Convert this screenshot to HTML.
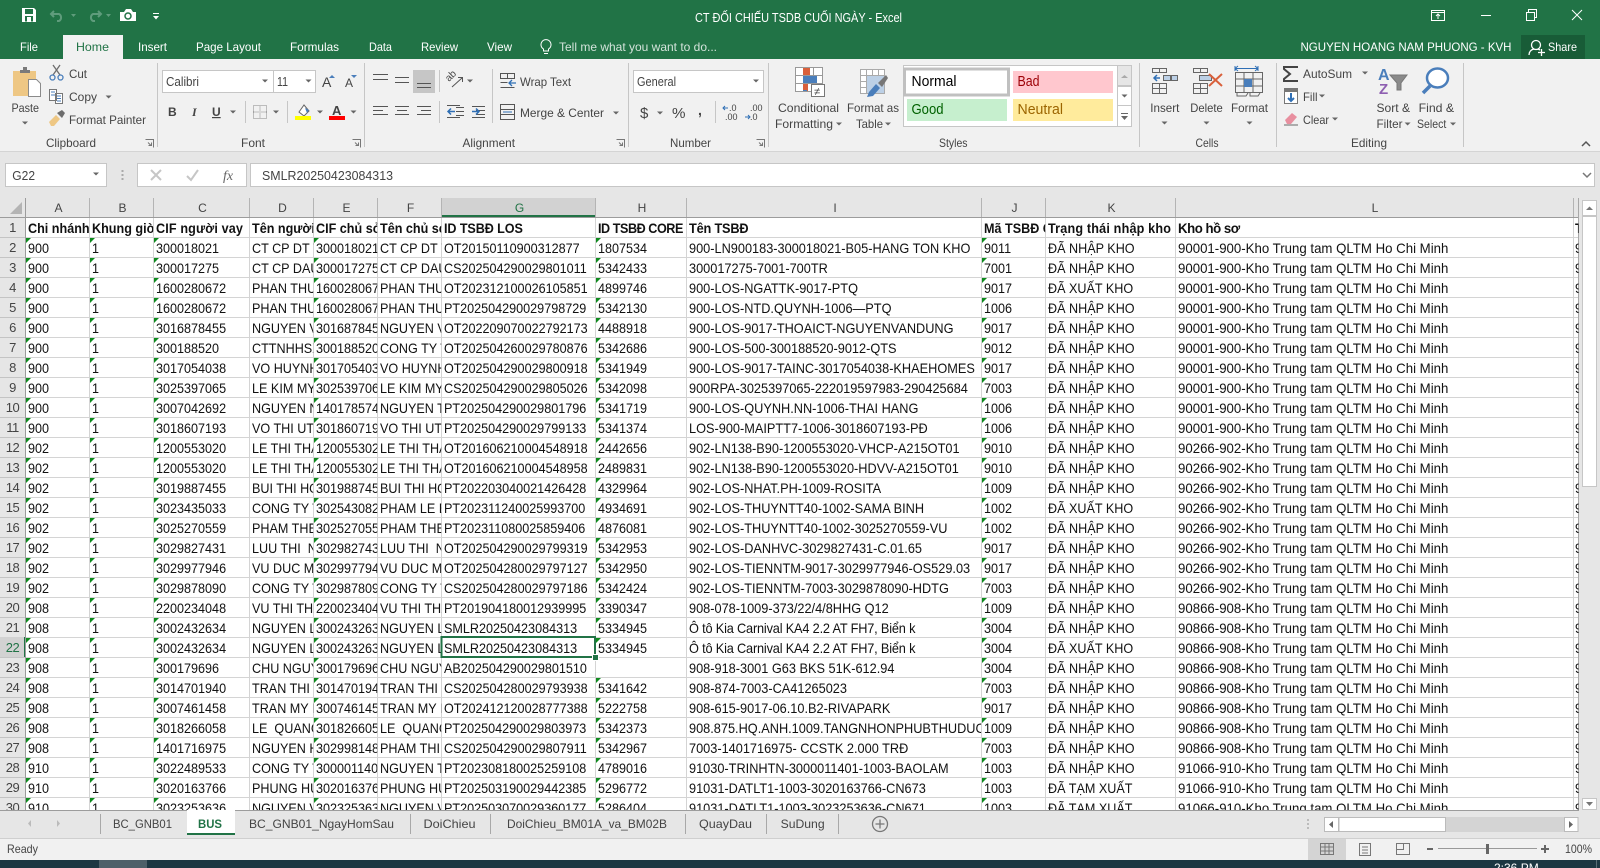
<!DOCTYPE html>
<html><head><meta charset="utf-8"><title>CT ĐỐI CHIẾU TSDB CUỐI NGÀY - Excel</title>
<style>
html,body{margin:0;padding:0;width:1600px;height:868px;overflow:hidden;background:#e6e6e6}
body{position:relative;font-family:"Liberation Sans","Noto Sans CJK SC",sans-serif}
svg{position:absolute;left:0;top:0}
svg text{font-family:"Liberation Sans","Noto Sans CJK SC",sans-serif;font-size:12px;fill:#444}
.c{position:absolute;top:218px;height:592px;overflow:hidden;white-space:pre;font-size:14px;line-height:20px;color:#111;transform:scaleX(.9);transform-origin:0 0}
.r{position:absolute;left:0;top:218px;width:25px;height:592px;overflow:hidden;white-space:pre;font-size:13px;line-height:20px;color:#444;text-align:center;letter-spacing:-.5px}
#bg{position:absolute;left:0;top:0;width:1600px;height:868px}
</style></head><body>
<svg id="bg" width="1600" height="868" viewBox="0 0 1600 868">
<defs>
<pattern id="h" patternUnits="userSpaceOnUse" width="4" height="20"><rect y="17" width="4" height="1" fill="#d4d4d4"/></pattern>
<pattern id="rh" patternUnits="userSpaceOnUse" width="4" height="20"><rect y="17" width="4" height="1" fill="#c4c4c4"/></pattern>
<pattern id="t" patternUnits="userSpaceOnUse" width="5" height="20" y="18"><path d="M0 0h5L0 5z" fill="#0e8a1e"/></pattern>
</defs>
<!-- grid -->
<rect x="26" y="218" width="1552" height="592" fill="#fff"/>
<rect x="0" y="198" width="25" height="612" fill="#e6e6e6"/>
<rect y="217" x="26" width="1552" height="593" fill="url(#h)"/>
<rect y="217" x="0" width="25" height="593" fill="url(#rh)"/>
<g fill="#d4d4d4">
<rect x="89" y="218" width="1" height="592"/><rect x="153" y="218" width="1" height="592"/><rect x="249" y="218" width="1" height="592"/><rect x="313" y="218" width="1" height="592"/><rect x="377" y="218" width="1" height="592"/><rect x="441" y="218" width="1" height="592"/><rect x="595" y="218" width="1" height="592"/><rect x="686" y="218" width="1" height="592"/><rect x="981" y="218" width="1" height="592"/><rect x="1045" y="218" width="1" height="592"/><rect x="1175" y="218" width="1" height="592"/><rect x="1573" y="218" width="1" height="592"/>
</g>
<rect x="1578" y="198" width="1" height="612" fill="#a8a8a8"/>
<!-- headers -->
<rect x="0" y="198" width="1578" height="19" fill="#e6e6e6"/>
<rect x="442" y="198" width="153" height="19" fill="#d2d2d2"/>
<rect x="442" y="215" width="154" height="2" fill="#217346"/>
<rect x="0" y="637" width="25" height="20" fill="#d2d2d2"/>
<rect x="24" y="637" width="2" height="20" fill="#217346"/>
<rect x="0" y="217" width="1578" height="1" fill="#9c9c9c"/>
<rect x="25" y="198" width="1" height="612" fill="#9c9c9c"/>
<g fill="#b4b4b4">
<rect x="89" y="198" width="1" height="19"/><rect x="153" y="198" width="1" height="19"/><rect x="249" y="198" width="1" height="19"/><rect x="313" y="198" width="1" height="19"/><rect x="377" y="198" width="1" height="19"/><rect x="441" y="198" width="1" height="19"/><rect x="595" y="198" width="1" height="19"/><rect x="686" y="198" width="1" height="19"/><rect x="981" y="198" width="1" height="19"/><rect x="1045" y="198" width="1" height="19"/><rect x="1175" y="198" width="1" height="19"/><rect x="1573" y="198" width="1" height="19"/>
</g>
<path d="M22 202v12H10z" fill="#b4b4b4"/>
<g font-size="13" text-anchor="middle" style="font-size:13px">
<text x="58.5" y="212" text-anchor="middle">A</text><text x="122.5" y="212" text-anchor="middle">B</text><text x="202.5" y="212" text-anchor="middle">C</text><text x="282.5" y="212" text-anchor="middle">D</text><text x="346.5" y="212" text-anchor="middle">E</text><text x="410.5" y="212" text-anchor="middle">F</text><text x="519.5" y="212" text-anchor="middle" style="fill:#217346">G</text><text x="642" y="212" text-anchor="middle">H</text><text x="835" y="212" text-anchor="middle">I</text><text x="1014.5" y="212" text-anchor="middle">J</text><text x="1111.5" y="212" text-anchor="middle">K</text><text x="1375" y="212" text-anchor="middle">L</text>
</g>
<!-- error triangles -->
<g transform="translate(26,0)"><rect y="238" width="5" height="572" fill="url(#t)"/></g>
<g transform="translate(90,0)"><rect y="238" width="5" height="572" fill="url(#t)"/></g>
<g transform="translate(154,0)"><rect y="238" width="5" height="572" fill="url(#t)"/></g>
<g transform="translate(314,0)"><rect y="238" width="5" height="572" fill="url(#t)"/></g>
<g transform="translate(596,0)"><rect y="238" width="5" height="572" fill="url(#t)"/></g>
<g transform="translate(982,0)"><rect y="238" width="5" height="572" fill="url(#t)"/></g>
<rect x="596" y="658" width="6" height="6" fill="#fff"/>
</svg>

<div class="r">1
2
3
4
5
6
7
8
9
10
11
12
13
14
15
16
17
18
19
20
21
<span style="color:#217346">22</span>
23
24
25
26
27
28
29
30</div>

<div class="c" style="left:28px;width:68px"><b>Chi nhánh</b>
900
900
900
900
900
900
900
900
900
900
902
902
902
902
902
902
902
902
908
908
908
908
908
908
908
908
910
910
910</div>
<div class="c" style="left:92px;width:68px"><b>Khung giờ</b>
1
1
1
1
1
1
1
1
1
1
1
1
1
1
1
1
1
1
1
1
1
1
1
1
1
1
1
1
1</div>
<div class="c" style="left:156px;width:103px"><b style="letter-spacing:.15px">CIF người vay</b>
300018021
300017275
1600280672
1600280672
3016878455
300188520
3017054038
3025397065
3007042692
3018607193
1200553020
1200553020
3019887455
3023435033
3025270559
3029827431
3029977946
3029878090
2200234048
3002432634
3002432634
300179696
3014701940
3007461458
3018266058
1401716975
3022489533
3020163766
3023253636</div>
<div class="c" style="left:252px;width:68px"><b>Tên người vay</b>
CT CP DT VA
CT CP DAU TU
PHAN THUY
PHAN THUY
NGUYEN VAN
CTTNHHSX
VO HUYNH
LE KIM MY
NGUYEN N
VO THI UT
LE THI THAN
LE THI THAN
BUI THI HONG
CONG TY TN
PHAM THE
LUU THI  NG
VU DUC MIN
CONG TY TN
VU THI THA
NGUYEN LE
NGUYEN LE
CHU NGUYEN
TRAN THI  N
TRAN MY LE
LE  QUANG
NGUYEN HO
CONG TY TN
PHUNG HUU
NGUYEN VAN</div>
<div class="c" style="left:316px;width:68px"><b>CIF chủ sở hữu</b>
300018021
300017275
1600280672
1600280672
3016878455
300188520
3017054038
3025397065
1401785740
3018607193
1200553020
1200553020
3019887455
3025430820
3025270559
3029827431
3029977946
3029878090
2200234048
3002432634
3002432634
300179696
3014701940
3007461458
3018266058
3029981480
3000011401
3020163766
3023253636</div>
<div class="c" style="left:380px;width:68px"><b>Tên chủ sở hữu</b>
CT CP DT VA
CT CP DAU TU
PHAN THUY
PHAN THUY
NGUYEN VAN
CONG TY TN
VO HUYNH
LE KIM MY
NGUYEN TH
VO THI UT
LE THI THAN
LE THI THAN
BUI THI HONG
PHAM LE BA
PHAM THE
LUU THI  NG
VU DUC MIN
CONG TY TN
VU THI THA
NGUYEN LE
NGUYEN LE
CHU NGUYEN
TRAN THI  N
TRAN MY LE
LE  QUANG
PHAM THI H
NGUYEN TH
PHUNG HUU
NGUYEN VAN</div>
<div class="c" style="left:444px;width:168px"><b style="letter-spacing:-.1px">ID TSBĐ LOS</b>
OT20150110900312877
CS202504290029801011
OT202312100026105851
PT202504290029798729
OT202209070022792173
OT202504260029780876
OT202504290029800918
CS202504290029805026
PT202504290029801796
PT202504290029799133
OT201606210004548918
OT201606210004548958
PT202203040021426428
PT202311240025993700
PT202311080025859406
OT202504290029799319
OT202504280029797127
CS202504280029797186
PT201904180012939995
SMLR20250423084313
SMLR20250423084313
AB202504290029801510
CS202504280029793938
OT202412120028777388
PT202504290029803973
CS202504290029807911
PT202308180025259108
PT202503190029442385
PT202503070029360177</div>
<div class="c" style="left:598px;width:98px"><b style="letter-spacing:-.5px">ID TSBĐ CORE</b>
1807534
5342433
4899746
5342130
4488918
5342686
5341949
5342098
5341719
5341374
2442656
2489831
4329964
4934691
4876081
5342953
5342950
5342424
3390347
5334945
5334945

5341642
5222758
5342373
5342967
4789016
5296772
5286404</div>
<div class="c" style="left:689px;width:321px;transform:scaleX(.91)"><b style="letter-spacing:-.2px">Tên TSBĐ</b>
900-LN900183-300018021-B05-HANG TON KHO
300017275-7001-700TR
900-LOS-NGATTK-9017-PTQ
900-LOS-NTD.QUYNH-1006—PTQ
900-LOS-9017-THOAICT-NGUYENVANDUNG
900-LOS-500-300188520-9012-QTS
900-LOS-9017-TAINC-3017054038-KHAEHOMES
900RPA-3025397065-222019597983-290425684
900-LOS-QUYNH.NN-1006-THAI HANG
LOS-900-MAIPTT7-1006-3018607193-PĐ
902-LN138-B90-1200553020-VHCP-A215OT01
902-LN138-B90-1200553020-HDVV-A215OT01
902-LOS-NHAT.PH-1009-ROSITA
902-LOS-THUYNTT40-1002-SAMA BINH
902-LOS-THUYNTT40-1002-3025270559-VU
902-LOS-DANHVC-3029827431-C.01.65
902-LOS-TIENNTM-9017-3029977946-OS529.03
902-LOS-TIENNTM-7003-3029878090-HDTG
908-078-1009-373/22/4/8HHG Q12
<span style="letter-spacing:-.19px">Ô tô Kia Carnival KA4 2.2 AT FH7, Biển k</span>
<span style="letter-spacing:-.19px">Ô tô Kia Carnival KA4 2.2 AT FH7, Biển k</span>
908-918-3001 G63 BKS 51K-612.94
908-874-7003-CA41265023
908-615-9017-06.10.B2-RIVAPARK
908.875.HQ.ANH.1009.TANGNHONPHUBTHUDUC
7003-1401716975- CCSTK 2.000 TRĐ
91030-TRINHTN-3000011401-1003-BAOLAM
91031-DATLT1-1003-3020163766-CN673
91031-DATLT1-1003-3023253636-CN671</div>
<div class="c" style="left:984px;width:68px"><b>Mã TSBĐ Core</b>
9011
7001
9017
1006
9017
9012
9017
7003
1006
1006
9010
9010
1009
1002
1002
9017
9017
7003
1009
3004
3004
3004
7003
9017
1009
7003
1003
1003
1003</div>
<div class="c" style="left:1048px;width:141px"><b style="letter-spacing:.2px">Trạng thái nhập kho</b>
ĐÃ NHẬP KHO
ĐÃ NHẬP KHO
ĐÃ XUẤT KHO
ĐÃ NHẬP KHO
ĐÃ NHẬP KHO
ĐÃ NHẬP KHO
ĐÃ NHẬP KHO
ĐÃ NHẬP KHO
ĐÃ NHẬP KHO
ĐÃ NHẬP KHO
ĐÃ NHẬP KHO
ĐÃ NHẬP KHO
ĐÃ NHẬP KHO
ĐÃ XUẤT KHO
ĐÃ NHẬP KHO
ĐÃ NHẬP KHO
ĐÃ NHẬP KHO
ĐÃ NHẬP KHO
ĐÃ NHẬP KHO
ĐÃ NHẬP KHO
ĐÃ XUẤT KHO
ĐÃ NHẬP KHO
ĐÃ NHẬP KHO
ĐÃ NHẬP KHO
ĐÃ NHẬP KHO
ĐÃ NHẬP KHO
ĐÃ NHẬP KHO
ĐÃ TẠM XUẤT
ĐÃ TẠM XUẤT</div>
<div class="c" style="left:1178px;width:418px;transform:scaleX(.945)"><b style="letter-spacing:-.5px">Kho hồ sơ</b>
90001-900-Kho Trung tam QLTM Ho Chi Minh
90001-900-Kho Trung tam QLTM Ho Chi Minh
90001-900-Kho Trung tam QLTM Ho Chi Minh
90001-900-Kho Trung tam QLTM Ho Chi Minh
90001-900-Kho Trung tam QLTM Ho Chi Minh
90001-900-Kho Trung tam QLTM Ho Chi Minh
90001-900-Kho Trung tam QLTM Ho Chi Minh
90001-900-Kho Trung tam QLTM Ho Chi Minh
90001-900-Kho Trung tam QLTM Ho Chi Minh
90001-900-Kho Trung tam QLTM Ho Chi Minh
90266-902-Kho Trung tam QLTM Ho Chi Minh
90266-902-Kho Trung tam QLTM Ho Chi Minh
90266-902-Kho Trung tam QLTM Ho Chi Minh
90266-902-Kho Trung tam QLTM Ho Chi Minh
90266-902-Kho Trung tam QLTM Ho Chi Minh
90266-902-Kho Trung tam QLTM Ho Chi Minh
90266-902-Kho Trung tam QLTM Ho Chi Minh
90266-902-Kho Trung tam QLTM Ho Chi Minh
90866-908-Kho Trung tam QLTM Ho Chi Minh
90866-908-Kho Trung tam QLTM Ho Chi Minh
90866-908-Kho Trung tam QLTM Ho Chi Minh
90866-908-Kho Trung tam QLTM Ho Chi Minh
90866-908-Kho Trung tam QLTM Ho Chi Minh
90866-908-Kho Trung tam QLTM Ho Chi Minh
90866-908-Kho Trung tam QLTM Ho Chi Minh
90866-908-Kho Trung tam QLTM Ho Chi Minh
91066-910-Kho Trung tam QLTM Ho Chi Minh
91066-910-Kho Trung tam QLTM Ho Chi Minh
91066-910-Kho Trung tam QLTM Ho Chi Minh</div>
<div class="c" style="left:1575px;width:4px"><b>T</b>
9
9
9
9
9
9
9
9
9
9
9
9
9
9
9
9
9
9
9
9
9
9
9
9
9
9
9
9
9</div>

<svg width="1600" height="868" viewBox="0 0 1600 868">
<defs>
<path id="a" d="M-3-1.5h6l-3 3z" fill="#666"/>
<path id="la" d="M.5.5h8v8M3 3.5l3 3M3.5 6.5h3v-3" fill="none" stroke="#777"/>
</defs>
<!-- selection -->
<rect x="441.5" y="637" width="153.5" height="20" fill="none" stroke="#217346" stroke-width="2"/>
<rect x="592" y="654" width="7" height="7" fill="#fff"/>
<rect x="593" y="655" width="5" height="5" fill="#217346"/>

<!-- title bar -->
<rect width="1600" height="59" fill="#217346"/>
<rect x="63" y="35" width="60" height="24" fill="#f1f1f1"/>
<rect x="1521" y="35" width="64" height="24" fill="#185c37"/>
<path d="M22 8h12l2 2v12H22z" fill="#fff"/>
<rect x="25" y="9" width="8" height="5" fill="#217346"/>
<rect x="25" y="16" width="8" height="5.5" fill="#217346"/>
<rect x="27" y="17" width="4" height="5" fill="#fff"/>
<g fill="none" stroke="#5f9c7c" stroke-width="2"><path d="M54 11l-3 3 3 3"/><path d="M52 14h7a4 4 0 0 1 0 7h-2"/><path d="M98 11l3 3-3 3"/><path d="M100 14h-7a4 4 0 0 0 0 7h2"/></g>
<path d="M71 14h5l-2.5 3zM106 14h5l-2.5 3z" fill="#5f9c7c"/>
<path d="M120 12h4l2-3h5l2 3h3v9h-16z" fill="#fff"/>
<circle cx="128" cy="16" r="3" fill="none" stroke="#217346" stroke-width="1.5"/>
<path d="M153 13h6v1h-6zM153 16h6l-3 3.5z" fill="#fff"/>
<text x="695" y="22" textLength="207" lengthAdjust="spacingAndGlyphs" style="fill:#fff;font-size:13px">CT ĐỐI CHIẾU TSDB CUỐI NGÀY - Excel</text>
<g fill="none" stroke="#fff" stroke-width="1">
<path d="M1431.5 10.5h13v10h-13zM1431.5 12.5h13M1438 19v-5M1436 16l2-2 2 2"/>
<path d="M1481 15.5h10"/>
<path d="M1526.5 12.5h8v8h-8zM1528.5 12v-2.5h8v8H1535"/>
<path d="M1572 10l10 10M1582 10l-10 10"/>
</g>
<g style="font-size:13px">
<text x="20" y="51" textLength="18" lengthAdjust="spacingAndGlyphs" style="fill:#fff">File</text>
<text x="76" y="51" textLength="33" lengthAdjust="spacingAndGlyphs" style="fill:#217346">Home</text>
<text x="138" y="51" textLength="29" lengthAdjust="spacingAndGlyphs" style="fill:#fff">Insert</text>
<text x="196" y="51" textLength="65" lengthAdjust="spacingAndGlyphs" style="fill:#fff">Page Layout</text>
<text x="290" y="51" textLength="49" lengthAdjust="spacingAndGlyphs" style="fill:#fff">Formulas</text>
<text x="369" y="51" textLength="23" lengthAdjust="spacingAndGlyphs" style="fill:#fff">Data</text>
<text x="421" y="51" textLength="37" lengthAdjust="spacingAndGlyphs" style="fill:#fff">Review</text>
<text x="487" y="51" textLength="25" lengthAdjust="spacingAndGlyphs" style="fill:#fff">View</text>
<text x="559" y="51" textLength="158" lengthAdjust="spacingAndGlyphs" style="fill:#d3e3da">Tell me what you want to do...</text>
<text x="1300.5" y="51" textLength="211" lengthAdjust="spacingAndGlyphs" style="fill:#fff">NGUYEN HOANG NAM PHUONG - KVH</text>
<text x="1548" y="51" textLength="29" lengthAdjust="spacingAndGlyphs" style="fill:#fff">Share</text>
</g>
<path d="M543.5 49a5 5 0 1 1 5 0v2h-5zM544 53.500h4" fill="none" stroke="#fff"/>
<g fill="none" stroke="#fff" stroke-width="1.3"><circle cx="1536" cy="45" r="4.500"/><path d="M1529 55c0-4 3-5.500 5-6M1538 49l2 1M1538 52.500h7M1541.500 49v7"/></g>

<!-- ribbon -->
<rect y="59" width="1600" height="92" fill="#f1f1f1"/>
<rect y="151" width="1600" height="1" fill="#d4d4d4"/>
<g fill="#c6c6c6">
<rect x="157" y="63" width="1" height="84"/><rect x="364" y="63" width="1" height="84"/><rect x="628" y="63" width="1" height="84"/><rect x="768" y="63" width="1" height="84"/><rect x="1139" y="63" width="1" height="84"/><rect x="1276" y="63" width="1" height="84"/><rect x="1463" y="63" width="1" height="84"/>
<rect x="245" y="101" width="1" height="22"/><rect x="287" y="101" width="1" height="22"/><rect x="439" y="70" width="1" height="22"/><rect x="439" y="101" width="1" height="22"/><rect x="492" y="69" width="1" height="54"/><rect x="715" y="101" width="1" height="22"/>
</g>
<!-- clipboard -->
<rect x="13" y="71" width="23" height="25" fill="#eec784"/>
<path d="M20 73v-3h3v-3h4v3h3v3z" fill="#7a7a7a"/>
<path d="M28.5 79.5h8l4 4v13h-12z" fill="#fff" stroke="#8a8a8a"/>
<use href="#a" x="25" y="123"/>
<g fill="none" stroke="#6d6d6d" stroke-width="1.3"><path d="M53 75l7-10M60 75l-7-10"/></g>
<g fill="none" stroke="#4a7ebb" stroke-width="1.3"><circle cx="52.5" cy="77.5" r="2.5"/><circle cx="60.5" cy="77.5" r="2.5"/></g>
<g fill="#fff" stroke="#777"><path d="M49.5 89.5h7v11h-7zM55.5 93.5h7v10h-7z"/></g>
<path d="M51 92h4M51 95h4M57 96h4M57 98.5h4M57 101h4" stroke="#4a7ebb" fill="none"/>
<path d="M49 122l7-7 4 4-6 7h-3z" fill="#eec784"/>
<path d="M57 113l5-3 3 3-3 5z" fill="#6d6d6d"/>
<use href="#a" x="108.6" y="97"/>
<g style="font-size:13px">
<text x="69" y="78" textLength="18" lengthAdjust="spacingAndGlyphs">Cut</text>
<text x="69" y="101" textLength="28" lengthAdjust="spacingAndGlyphs">Copy</text>
<text x="69" y="124" textLength="77" lengthAdjust="spacingAndGlyphs">Format Painter</text>
<text x="11.5" y="112" textLength="27.5" lengthAdjust="spacingAndGlyphs">Paste</text>
<text x="46" y="147" textLength="50" lengthAdjust="spacingAndGlyphs">Clipboard</text>
<text x="241" y="147" textLength="24" lengthAdjust="spacingAndGlyphs">Font</text>
<text x="462.5" y="147" textLength="52.5" lengthAdjust="spacingAndGlyphs">Alignment</text>
<text x="670" y="147" textLength="41" lengthAdjust="spacingAndGlyphs">Number</text>
<text x="939" y="147" textLength="28.5" lengthAdjust="spacingAndGlyphs">Styles</text>
<text x="1195.5" y="147" textLength="23" lengthAdjust="spacingAndGlyphs">Cells</text>
<text x="1351" y="147" textLength="36" lengthAdjust="spacingAndGlyphs">Editing</text>
<text x="520" y="86" textLength="51" lengthAdjust="spacingAndGlyphs">Wrap Text</text>
<text x="520" y="117" textLength="84" lengthAdjust="spacingAndGlyphs">Merge &amp; Center</text>
<text x="778" y="112" textLength="61" lengthAdjust="spacingAndGlyphs">Conditional</text>
<text x="775" y="128" textLength="58" lengthAdjust="spacingAndGlyphs">Formatting</text>
<text x="847" y="112" textLength="52" lengthAdjust="spacingAndGlyphs">Format as</text>
<text x="856" y="128" textLength="27" lengthAdjust="spacingAndGlyphs">Table</text>
<text x="1150.3" y="112" textLength="29" lengthAdjust="spacingAndGlyphs">Insert</text>
<text x="1190.3" y="112" textLength="32.5" lengthAdjust="spacingAndGlyphs">Delete</text>
<text x="1231" y="112" textLength="37" lengthAdjust="spacingAndGlyphs">Format</text>
<text x="1303" y="78" textLength="49" lengthAdjust="spacingAndGlyphs">AutoSum</text>
<text x="1303" y="101" textLength="14.5" lengthAdjust="spacingAndGlyphs">Fill</text>
<text x="1303" y="124" textLength="26" lengthAdjust="spacingAndGlyphs">Clear</text>
<text x="1376.5" y="112" textLength="33.5" lengthAdjust="spacingAndGlyphs">Sort &amp;</text>
<text x="1376.5" y="128" textLength="26" lengthAdjust="spacingAndGlyphs">Filter</text>
<text x="1418.6" y="112" textLength="35.5" lengthAdjust="spacingAndGlyphs">Find &amp;</text>
<text x="1417" y="128" textLength="29.3" lengthAdjust="spacingAndGlyphs">Select</text>
</g>
<use href="#la" x="145" y="139"/><use href="#la" x="352" y="139"/><use href="#la" x="616" y="139"/><use href="#la" x="756" y="139"/>
<!-- font -->
<rect x="162.5" y="70.5" width="153" height="22" fill="#fff" stroke="#c6c6c6"/>
<rect x="273" y="71" width="1" height="21" fill="#c6c6c6"/>
<text x="166" y="86" textLength="33" lengthAdjust="spacingAndGlyphs" style="font-size:13px">Calibri</text>
<text x="277" y="86" textLength="11" lengthAdjust="spacingAndGlyphs" style="font-size:13px">11</text>
<use href="#a" x="265" y="81"/><use href="#a" x="308.5" y="81"/>
<text x="322" y="87" style="font-size:14px">A</text>
<path d="M329 78l3-3 3 3z" fill="#4a7ebb"/>
<text x="345" y="87" style="font-size:12px">A</text>
<path d="M351 75h6l-3 3z" fill="#4a7ebb"/>
<text x="168" y="116" style="font-weight:bold;font-size:12px">B</text>
<text x="192" y="116" style="font-style:italic;font-size:12px;font-family:'Liberation Serif',serif;font-weight:bold">I</text>
<text x="212" y="116" style="font-size:12px;font-weight:bold;text-decoration:underline">U</text>
<use href="#a" x="233" y="112"/>
<path d="M253.5 105.5h13v13h-13zM260 105.5v13M253.5 112h13" fill="none" stroke="#888" stroke-dasharray="1 1"/>
<use href="#a" x="276" y="112"/>
<path d="M299 112l5-7 5 6-5 5z" fill="#fff" stroke="#666"/><path d="M305 108l4 2-2 3z" fill="#4a7ebb"/>
<rect x="295" y="116" width="16" height="4" fill="#ffff00"/>
<use href="#a" x="320" y="112"/>
<text x="332" y="115" style="font-size:13px;font-weight:bold">A</text>
<rect x="329" y="116" width="16" height="4" fill="#ff0000"/>
<use href="#a" x="353.5" y="112"/>
<!-- alignment -->
<rect x="413" y="70" width="22" height="23" fill="#c6c6c6"/>
<g stroke="#555" fill="none">
<path d="M373 74.5h15M373 79.5h15M395 77.5h14M395 82.5h14M417 83.5h14M417 87.5h14"/>
<path d="M373 106.5h15M373 110.5h10M373 114.5h15M395 106.5h14M397 110.5h10M395 114.5h14M417 106.5h14M421 110.5h10M417 114.5h14"/>
<path d="M456 107.5h8M456 111.5h8M456 115.5h8M447 105.500h13M472 106.500h13M476 110.500h9M476 114.500h9M472 117.500h13M447 117.500h13"/>
</g>
<g stroke="#2f6fb5" fill="none" stroke-width="1.5"><path d="M455 111.500h-7M451 108.500l-3 3 3 3M472 111.500h7M476 108.500l3 3-3 3"/></g>
<text x="0" y="0" transform="translate(449,82) rotate(-45)" style="font-size:10px">ab</text>
<path d="M452 87l10-9M458 77.500h4.500v4.500" fill="none" stroke="#555"/>
<use href="#a" x="470" y="81"/>
<path d="M500.5 73.500h14v5h-14zM507.500 73.500v5M500.5 82.500h7M500.5 87.500h14" fill="none" stroke="#555"/>
<path d="M516 83h-7M512 80l-3 3 3 3" fill="none" stroke="#2f6fb5" stroke-width="1.3"/>
<path d="M500.5 104.500h14v15h-14zM500.5 109.500h14M500.5 114.500h14" fill="none" stroke="#555"/>
<path d="M503 112h9" stroke="#2f6fb5"/>
<use href="#a" x="616" y="113"/>
<!-- number -->
<rect x="633.5" y="70.5" width="130" height="22" fill="#fff" stroke="#c6c6c6"/>
<text x="637" y="86" textLength="39" lengthAdjust="spacingAndGlyphs" style="font-size:13px">General</text>
<use href="#a" x="756" y="81"/>
<text x="640" y="118" style="font-size:15px">$</text>
<use href="#a" x="660" y="113"/>
<text x="672" y="118" textLength="13.500" lengthAdjust="spacingAndGlyphs" style="font-size:15px">%</text>
<text x="698" y="115" style="font-weight:bold;font-size:14px">,</text>
<text x="729" y="111" style="font-size:9px">.0</text><text x="725" y="120" style="font-size:9px">.00</text><text x="750" y="111" style="font-size:9px">.00</text><text x="750" y="120" style="font-size:9px">.0</text>
<path d="M728 108h-5M725 106l-2 2 2 2M745 117h5M748 115l2 2-2 2" fill="none" stroke="#2f6fb5"/>
<!-- conditional formatting -->
<path d="M795.5 67.5h27v24h-27zM795.5 75.5h27M795.5 83.5h27M804.5 67.5v24M813.5 67.5v24" fill="#fff" stroke="#999"/>
<rect x="803" y="68" width="7" height="7" fill="#d9603b"/><rect x="803" y="76" width="14" height="7" fill="#4a7ebb"/><rect x="803" y="84" width="5" height="7" fill="#d9603b"/><rect x="803" y="90" width="4" height="1" fill="#4a7ebb"/>
<rect x="811.5" y="84.500" width="13" height="12" fill="#fff" stroke="#777"/>
<text x="814" y="95" style="font-size:11px">≠</text>
<use href="#a" x="839" y="124"/>
<path d="M860.5 69.5h24v24h-24zM860.5 75.5h24M860.5 81.5h24M860.5 87.5h24M866.5 69.5v24M872.5 69.5v24M878.5 69.5v24" fill="#fff" stroke="#aaa"/>
<rect x="867" y="76" width="17" height="17" fill="#bcd0e6"/>
<path d="M869 92l7-8 4 4-7 8-6 1z" fill="#4a7ebb"/><path d="M878 83l8-8 2 3-6 9z" fill="#777"/>
<use href="#a" x="888" y="124"/>
<!-- styles -->
<rect x="903.5" y="65.5" width="228" height="61" fill="#fff" stroke="#c6c6c6"/>
<rect x="904.5" y="69" width="104" height="26" fill="#fff" stroke="#c0c0c0" stroke-width="3"/>
<rect x="1013" y="71" width="100" height="22" fill="#ffc7ce"/>
<rect x="907" y="99" width="100" height="22" fill="#c6efce"/>
<rect x="1013" y="99" width="100" height="22" fill="#ffeb9c"/>
<g style="font-size:15px">
<text x="911.5" y="86" textLength="45" lengthAdjust="spacingAndGlyphs" style="fill:#000;font-size:15px">Normal</text>
<text x="1017.5" y="86" textLength="22" lengthAdjust="spacingAndGlyphs" style="fill:#9c0006;font-size:15px">Bad</text>
<text x="911.5" y="114" textLength="32" lengthAdjust="spacingAndGlyphs" style="fill:#006100;font-size:15px">Good</text>
<text x="1017.5" y="114" textLength="45.5" lengthAdjust="spacingAndGlyphs" style="fill:#9c6500;font-size:15px">Neutral</text>
</g>
<rect x="1117.5" y="65.5" width="14" height="20" fill="#e6e6e6" stroke="#c6c6c6"/>
<rect x="1117.5" y="86.5" width="14" height="19" fill="#fff" stroke="#c6c6c6"/>
<rect x="1117.5" y="105.5" width="14" height="21" fill="#fff" stroke="#c6c6c6"/>
<path d="M1121 78l3.5-3 3.5 3z" fill="#aaa"/><use href="#a" x="1124.5" y="96"/><path d="M1121 113h7v1h-7zM1121 116h7l-3.5 4z" fill="#666"/>
<!-- cells -->
<g fill="none" stroke="#666">
<path d="M1152.5 68.5h14v4h-14zM1159.5 68.5v4M1152.5 83.5h14v10h-14zM1152.5 88.5h14M1159.5 83.5v10"/>
<path d="M1193.5 68.5h14v4h-14zM1200.5 68.5v4M1193.5 83.5h14v10h-14zM1193.5 88.5h14M1200.5 83.5v10"/>
<path d="M1235.5 72.5h27v20h-27zM1235.5 79h27M1235.5 86h27M1244 72.5v20M1253 72.5v20M1237 93v3h9l2-3M1250 93v3h8l2-3"/>
</g>
<path d="M1163.5 75.5h7v5h-7zM1171.5 75.5h6v5h-6z" fill="#bcd0e6" stroke="#666"/>
<path d="M1160 78h-6M1157 75l-3 3 3 3" fill="none" stroke="#2f6fb5" stroke-width="1.5"/>
<path d="M1199.5 75.5h12v5h-12z" fill="#bcd0e6" stroke="#666"/>
<path d="M1209 74l13 12M1222 74l-13 12" fill="none" stroke="#d9603b" stroke-width="2"/>
<path d="M1235 68h23M1235 65.500v5M1258 65.500v5M1238 65.500l-3 2.500 3 2.500M1255 65.500l3 2.500-3 2.500" fill="none" stroke="#2f6fb5" transform="translate(0,.5)"/>
<rect x="1244" y="79" width="8" height="8" fill="#4a7ebb"/>
<use href="#a" x="1164.5" y="123"/><use href="#a" x="1206.5" y="123"/><use href="#a" x="1249.5" y="123"/>
<!-- editing -->
<path d="M1298 67h-14v2l6 5-6 5v2h14" fill="none" stroke="#444" stroke-width="2"/>
<use href="#a" x="1365" y="73"/>
<rect x="1284.5" y="88.5" width="13" height="15" fill="#fff" stroke="#777"/><rect x="1284" y="88" width="14" height="4" fill="#777"/>
<path d="M1291 93v8M1288 98l3 3 3-3" fill="none" stroke="#2f6fb5" stroke-width="2"/>
<use href="#a" x="1322" y="96"/>
<path d="M1285 120l7-7 5 4-6 7h-4z" fill="#e88f9f"/><path d="M1284 125h14" stroke="#666"/>
<use href="#a" x="1335" y="119"/>
<text x="1378" y="80" style="font-size:16px;font-weight:bold;fill:#4a7ebb">A</text>
<text x="1379" y="94" style="font-size:15px;font-weight:bold;fill:#8e5fb1">Z</text>
<path d="M1390 75h17l-6 8v7h-4v-7z" fill="#8a8a8a" stroke="#777"/>
<ellipse cx="1437.5" cy="78" rx="10.500" ry="9.500" fill="#fff" stroke="#4a7ebb" stroke-width="2.500"/>
<path d="M1430 86l-7 7" stroke="#4a7ebb" stroke-width="3.500"/>
<use href="#a" x="1407.6" y="124"/><use href="#a" x="1453" y="124"/>
<path d="M1582 146l4-4 4 4" fill="none" stroke="#555" stroke-width="1.5"/>

<!-- formula bar -->
<rect x="5.5" y="163.5" width="101" height="23" fill="#fff" stroke="#c6c6c6"/>
<rect x="137.5" y="163.5" width="109" height="23" fill="#fff" stroke="#c6c6c6"/>
<rect x="250.5" y="163.5" width="1344" height="23" fill="#fff" stroke="#c6c6c6"/>
<text x="12.3" y="180" textLength="22.7" lengthAdjust="spacingAndGlyphs" style="font-size:13px">G22</text>
<text x="262" y="180" textLength="131" lengthAdjust="spacingAndGlyphs" style="font-size:13px">SMLR20250423084313</text>
<use href="#a" x="96" y="174"/>
<path d="M121.5 170h2v2h-2zM121.5 174h2v2h-2zM121.5 178h2v2h-2z" fill="#aaa"/>
<path d="M151 170l10 10M161 170l-10 10M187 176l4 4 7-10" fill="none" stroke="#c6c6c6" stroke-width="2"/>
<text x="223" y="180" style="font-family:'Liberation Serif',serif;font-style:italic;font-size:14px;fill:#666">fx</text>
<path d="M1583 173l4 4 4-4" fill="none" stroke="#777" stroke-width="1.5"/>

<!-- vertical scrollbar -->
<rect x="1579" y="198" width="21" height="612" fill="#e6e6e6"/>
<rect x="1582.5" y="216.5" width="14" height="270" fill="#fff" stroke="#c6c6c6"/>
<rect x="1582.5" y="200.5" width="14" height="15" fill="#fff" stroke="#c6c6c6"/>
<rect x="1582.5" y="798.5" width="14" height="11" fill="#fff" stroke="#c6c6c6"/>
<path d="M1586 210l3.5-3.5 3.5 3.5z" fill="#777"/><path d="M1586 802h7l-3.5 4z" fill="#777"/>

<!-- sheet tabs -->
<rect y="810" width="1600" height="28" fill="#e6e6e6"/>
<rect y="810" width="1579" height="1" fill="#9c9c9c"/>
<rect x="187" y="810" width="48" height="24" fill="#fff"/>
<rect x="187" y="833" width="48" height="2" fill="#217346"/>
<g fill="#a8a8a8"><rect x="100" y="814" width="1" height="20"/><rect x="410" y="814" width="1" height="20"/><rect x="490" y="814" width="1" height="20"/><rect x="685" y="814" width="1" height="20"/><rect x="766" y="814" width="1" height="20"/><rect x="838" y="814" width="1" height="20"/></g>
<path d="M31 820l-3 3.5 3 3.5zM57 820l3 3.5-3 3.5z" fill="#bbb"/>
<g style="font-size:13px">
<text x="113" y="828" textLength="59" lengthAdjust="spacingAndGlyphs">BC_GNB01</text>
<text x="198" y="828" textLength="24" lengthAdjust="spacingAndGlyphs" style="font-weight:bold;fill:#217346">BUS</text>
<text x="249" y="828" textLength="145" lengthAdjust="spacingAndGlyphs">BC_GNB01_NgayHomSau</text>
<text x="423.5" y="828" textLength="52" lengthAdjust="spacingAndGlyphs">DoiChieu</text>
<text x="507" y="828" textLength="160" lengthAdjust="spacingAndGlyphs">DoiChieu_BM01A_va_BM02B</text>
<text x="699" y="828" textLength="53" lengthAdjust="spacingAndGlyphs">QuayDau</text>
<text x="780.6" y="828" textLength="44" lengthAdjust="spacingAndGlyphs">SuDung</text>
</g>
<circle cx="880" cy="824" r="7.5" fill="none" stroke="#777" stroke-width="1.3"/>
<path d="M880 819.5v9M875.5 824h9" stroke="#777" stroke-width="1.3"/>
<path d="M1307 819h2v2h-2zM1307 823h2v2h-2zM1307 827h2v2h-2z" fill="#bbb"/>
<rect x="1324" y="817" width="254" height="15" fill="#d4d4d4"/>
<rect x="1324.5" y="817.5" width="14" height="14" fill="#fff" stroke="#bbb"/>
<rect x="1339" y="817.5" width="106.5" height="14" fill="#fff" stroke="#bbb"/>
<rect x="1564.5" y="817.5" width="13.5" height="14" fill="#fff" stroke="#bbb"/>
<path d="M1333 821l-4 3.5 4 3.5zM1569 821l4 3.5-4 3.5z" fill="#666"/>

<!-- status bar -->
<rect y="838" width="1600" height="22" fill="#f1f1f1"/>
<rect y="838" width="1600" height="1" fill="#cfcfcf"/>
<text x="7" y="853" textLength="31" lengthAdjust="spacingAndGlyphs" style="font-size:12px">Ready</text>
<rect x="1308" y="839" width="38" height="21" fill="#d4d4d4"/>
<path d="M1320.5 843.5h13v11h-13zM1320.5 847h13M1320.5 851h13M1325 843.5v11M1329 843.5v11" fill="none" stroke="#777"/>
<path d="M1359.5 843.5h11v12h-11zM1362 847h6M1362 850h6M1362 853h6" fill="none" stroke="#777"/>
<path d="M1396.5 843.5h13v11h-13zM1403.5 843.5v6h-7" fill="none" stroke="#777"/>
<rect x="1427" y="848" width="6" height="2" fill="#666"/>
<rect x="1438" y="848" width="99" height="1" fill="#999"/>
<rect x="1486" y="844" width="3" height="10" fill="#666"/>
<path d="M1541 848h8v2h-8zM1544 845h2v8h-2z" fill="#666"/>
<text x="1565" y="853" textLength="27" lengthAdjust="spacingAndGlyphs" style="font-size:12px">100%</text>

<!-- taskbar -->
<rect y="860" width="1600" height="8" fill="#1c3742"/>
<rect x="99" y="860" width="48" height="8" fill="#4d6069"/>
<rect x="1596" y="860" width="1" height="8" fill="#5a6e76"/>
<text x="1494" y="872" style="fill:#fff;font-size:12px">2:36 PM</text>
</svg>
</body></html>
